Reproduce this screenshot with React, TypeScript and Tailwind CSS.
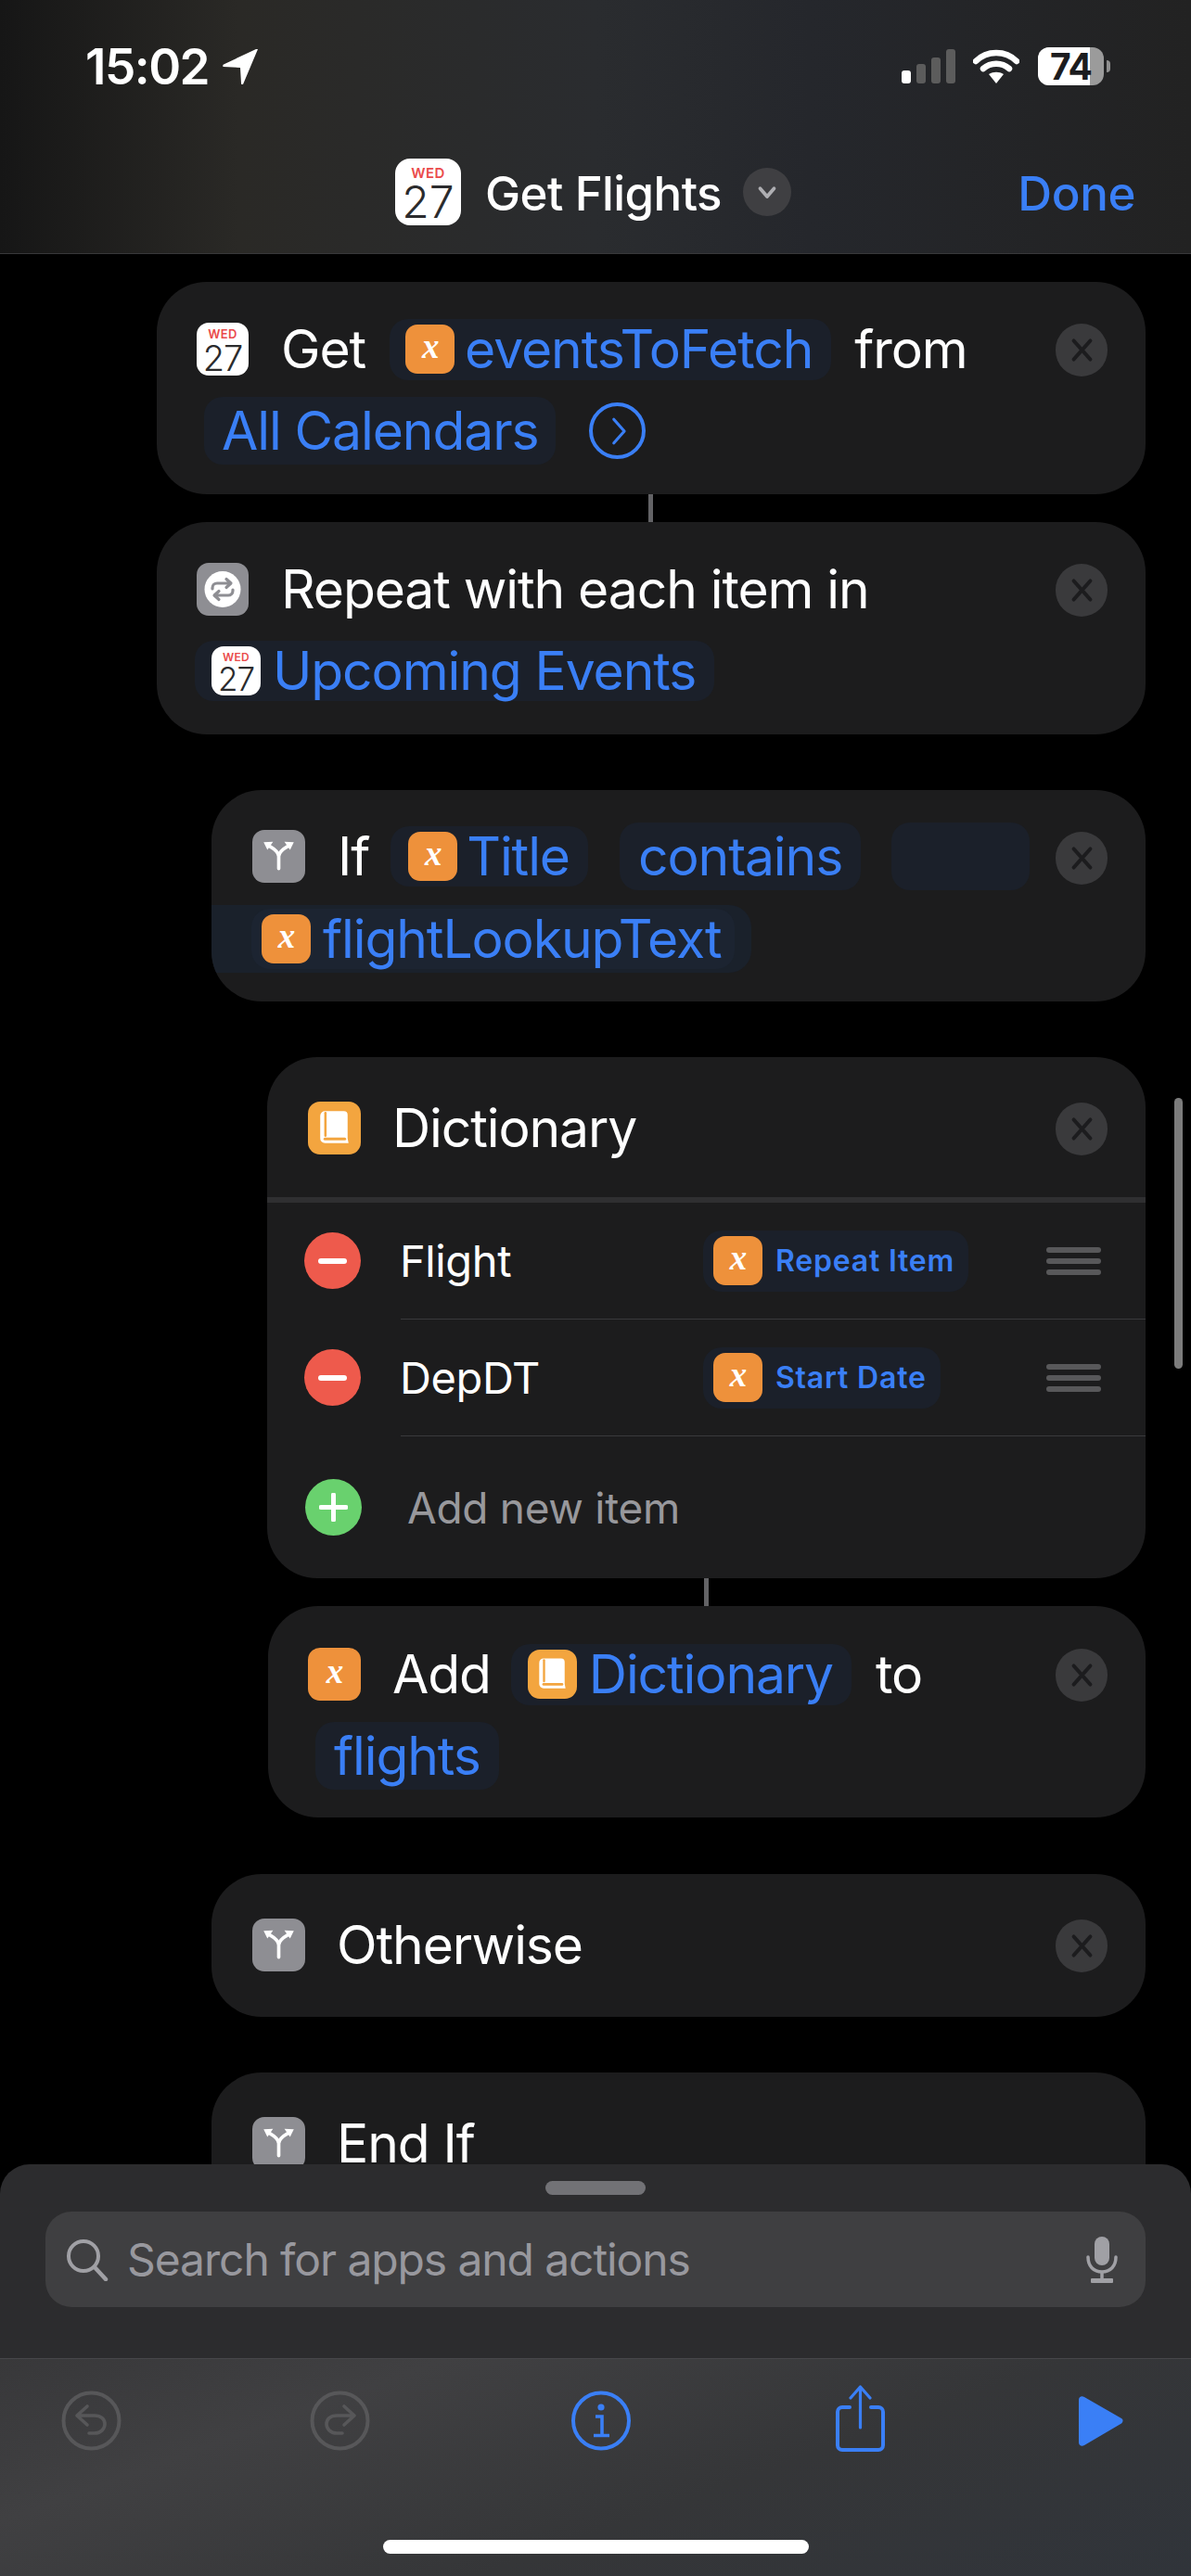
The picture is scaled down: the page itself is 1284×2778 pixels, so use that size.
import type { ReactNode } from "react"

const Calendar = ({ box, wed, day }: { box: string; wed: string; day: string }) => (
    <div className={`flex shrink-0 flex-col items-center bg-white ${box}`}>
        <span className={`font-semibold leading-none tracking-wide text-[#ea4b4b] ${wed}`}>WED</span>
        <span className={`font-light leading-none text-[#2b2b2d] ${day}`}>27</span>
    </div>
)

const CalendarTile = () => <Calendar box="h-[57px] w-[56px] rounded-[13px] pt-[6px]" wed="text-[13px]" day="text-[38px]" />

const VarTile = ({ size = "h-[53px] w-[53px]", bg = "bg-[#ee913b]" }: { size?: string; bg?: string }) => (
    <div className={`flex shrink-0 items-center justify-center rounded-[13px] ${size} ${bg}`}>
        <span className="font-['Liberation_Serif',serif] text-[37px] leading-none font-bold italic text-white -translate-y-[3px]">x</span>
    </div>
)

const BookGlyph = () => (
    <svg viewBox="0 0 56 56" className="h-full w-full">
        <path d="M18 10h20a4 4 0 0 1 4 4v25l1 5H18a5 5 0 0 1-5-5V15a5 5 0 0 1 5-5z" fill="#fff" />
        <path d="M18.5 12v24" stroke="#f3a53f" strokeWidth="2.5" strokeLinecap="round" />
        <path d="M18 39.5h21" stroke="#f3a53f" strokeWidth="3" strokeLinecap="round" />
    </svg>
)

const BookTile = ({ size = "h-[57px] w-[57px]" }: { size?: string }) => (
    <div className={`shrink-0 rounded-[13px] bg-[#f3a53f] ${size}`}>
        <BookGlyph />
    </div>
)

const BranchTile = () => (
    <div className="h-[57px] w-[57px] shrink-0 rounded-[13px] bg-[#8e8e93]">
        <svg viewBox="0 0 56 56" className="h-full w-full">
            <path d="M28 41V28c0-4-3-7-10-11M28 28c0-4 3-7 10-11" fill="none" stroke="#fff" strokeWidth="3.6" strokeLinecap="round" />
            <path d="M12 13l10-.5-6 8.5zM44 13l-10-.5 6 8.5z" fill="#fff" />
        </svg>
    </div>
)

const RepeatTile = () => (
    <div className="h-[57px] w-[56px] shrink-0 rounded-[13px] bg-[#8e8e93]">
        <svg viewBox="0 0 56 57" className="h-full w-full">
            <circle cx="28" cy="28.5" r="19.5" fill="#fff" />
            <path d="M17 28v-1a5 5 0 0 1 5-5h14M32 17.5l5 4.5-5 4.5M39 29v1a5 5 0 0 1-5 5H20M24 39.5L19 35l5-4.5" fill="none" stroke="#8e8e93" strokeWidth="3.2" strokeLinecap="round" strokeLinejoin="round" />
        </svg>
    </div>
)

const Close = ({ top }: { top: string }) => (
    <div className={`mr-[41px] flex h-[57px] w-[56px] shrink-0 items-center justify-center rounded-full bg-[#3a3a3c] ${top}`}>
        <svg viewBox="0 0 24 24" className="h-[27px] w-[27px]">
            <path d="M4 3l16 18M20 3L4 21" stroke="#1c1c1e" strokeWidth="3.4" strokeLinecap="round" />
        </svg>
    </div>
)

const Pill = ({ children, className }: { children: ReactNode; className: string }) => (
    <div className={`flex shrink-0 items-center rounded-[20px] bg-[#1b202a] text-[#3a7ff6] ${className}`}>{children}</div>
)

const Row = ({ children, className = "" }: { children: ReactNode; className?: string }) => (
    <div className={`flex h-[73px] items-center ${className}`}>{children}</div>
)

const Card = ({ children, className }: { children: ReactNode; className: string }) => (
    <div className={`mr-[49px] flex rounded-[54px] bg-[#1c1c1d] ${className}`}>{children}</div>
)

const Connector = ({ className }: { className: string }) => <div className={`h-[30px] w-[5px] bg-[#636366] ${className}`} />

const DragHandle = () => (
    <div className="ml-auto mr-[48px] flex w-[59px] flex-col gap-[6px]">
        <div className="h-[6px] rounded-full bg-[#58585a]" />
        <div className="h-[6px] rounded-full bg-[#58585a]" />
        <div className="h-[6px] rounded-full bg-[#58585a]" />
    </div>
)

const MinusCircle = () => (
    <div className="flex h-[61px] w-[61px] shrink-0 items-center justify-center rounded-full bg-[#ee5a4c]">
        <div className="h-[6px] w-[31px] rounded-full bg-white" />
    </div>
)

const StatusBar = () => (
    <div className="mt-[50px] flex h-[43px] items-center text-white">
        <span className="ml-[92px] pt-[2px] text-[53px] leading-none font-semibold tracking-[-1.5px]">15:02</span>
        <svg viewBox="0 0 38 38" className="ml-[15px] h-[38px] w-[38px]">
            <path d="M38 0L22 38c-1 1-2 0-2-1l-1-17L1 19c-1 0-1-2 0-2.500L36 0c1-.5 2-.5 2 0z" fill="#fff" />
        </svg>
        <div className="ml-auto flex h-[37px] items-end gap-[6px]">
            <div className="h-[14px] w-[10px] rounded-[3px] bg-white" />
            <div className="h-[21px] w-[10px] rounded-[3px] bg-[#5c5c5c]" />
            <div className="h-[28px] w-[10px] rounded-[3px] bg-[#5c5c5c]" />
            <div className="h-[37px] w-[10px] rounded-[3px] bg-[#5c5c5c]" />
        </div>
        <svg viewBox="0 0 50 37" className="ml-[19px] h-[37px] w-[50px]">
            <path d="M3 13C15 1 35 1 47 13M11 21c8-7 20-7 28 0" fill="none" stroke="#fff" strokeWidth="6.500" strokeLinecap="round" />
            <path d="M17 27c5-3 11-3 16 0l-8 10z" fill="#fff" />
        </svg>
        <div className="relative ml-[20px] flex h-[41px] w-[71px] items-center justify-center rounded-[12px] bg-[#9b9b9b]">
            <div className="absolute inset-y-0 left-0 w-[56px] rounded-l-[12px] bg-white" />
            <span className="relative text-[39px] leading-none font-bold tracking-[-1px] text-[#1c1c1e]">74</span>
        </div>
        <div className="ml-[3px] mr-[87px] h-[13px] w-[4px] rounded-r-full bg-[#8f8f8f]" />
    </div>
)

const Header = () => (
    <header className="h-[274px] shrink-0 border-b border-[#38383a] bg-[linear-gradient(90deg,#161616_0%,#2a2926_20%,#2a2c2f_50%,#25272c_68%,#222222_100%)]">
        <StatusBar />
        <div className="mt-[78px] flex h-[72px] items-center">
            <Calendar box="ml-[426px] h-[72px] w-[71px] rounded-[16px] pt-[8px]" wed="text-[15px]" day="text-[48px]" />
            <span className="ml-[26px] pt-[2px] text-[51px] leading-none font-medium tracking-[-0.6px] text-white">Get Flights</span>
            <div className="ml-[23px] flex h-[52px] w-[52px] items-center justify-center rounded-full bg-[#3f3f42]">
                <svg viewBox="0 0 24 24" className="h-[30px] w-[30px]">
                    <path d="M6 9l6 7 6-7" fill="none" stroke="#aeaeb2" strokeWidth="3" strokeLinecap="round" strokeLinejoin="round" />
                </svg>
            </div>
            <span className="ml-auto mr-[60px] pt-[2px] text-[51px] leading-none font-medium tracking-[-0.4px] text-[#3a7ff6]">Done</span>
        </div>
    </header>
)

const Workflow = () => (
    <main className="relative min-h-0 flex-1 overflow-hidden pt-[30px] text-[57px] leading-none tracking-[-1.1px] text-white">
        <Card className="ml-[169px] h-[229px]">
            <div className="flex-1 pt-[36px] pl-[43px]">
                <Row>
                    <CalendarTile />
                    <span className="ml-[35px]">Get</span>
                    <Pill className="ml-[26px] h-[66px] pl-[17px] pr-[20px]">
                        <VarTile />
                        <span className="ml-[11px]">eventsToFetch</span>
                    </Pill>
                    <span className="ml-[25px]">from</span>
                </Row>
                <Row className="mt-[15px]">
                    <Pill className="ml-[8px] h-[73px] pl-[19px] pr-[19px]">All Calendars</Pill>
                    <div className="ml-[36px] flex h-[61px] w-[61px] items-center justify-center rounded-full border-[4px] border-[#3a7ff6]">
                        <svg viewBox="0 0 24 24" className="h-[34px] w-[34px]">
                            <path d="M9 3l8 9-8 9" fill="none" stroke="#3a7ff6" strokeWidth="2.2" strokeLinecap="round" strokeLinejoin="round" />
                        </svg>
                    </div>
                </Row>
            </div>
            <Close top="mt-[45px]" />
        </Card>
        <Connector className="ml-[699px]" />
        <Card className="ml-[169px] h-[229px]">
            <div className="flex-1 pt-[36px] pl-[43px]">
                <Row>
                    <RepeatTile />
                    <span className="ml-[35px]">Repeat with each item in</span>
                </Row>
                <Row className="mt-[15px]">
                    <Pill className="-ml-[2px] h-[65px] pl-[18px] pr-[20px]">
                        <Calendar box="h-[53px] w-[53px] rounded-[13px] pt-[6px]" wed="text-[12px]" day="text-[35px]" />
                        <span className="ml-[13px]">Upcoming Events</span>
                    </Pill>
                </Row>
            </div>
            <Close top="mt-[45px]" />
        </Card>
        <Card className="ml-[228px] mt-[60px] h-[228px] overflow-hidden">
            <div className="flex-1 pt-[35px]">
                <Row className="pl-[44px]">
                    <BranchTile />
                    <span className="ml-[35px]">If</span>
                    <Pill className="ml-[23px] h-[65px] pl-[19px] pr-[20px]">
                        <VarTile />
                        <span className="ml-[10px]">Title</span>
                    </Pill>
                    <Pill className="ml-[34px] h-[73px] px-[20px]">contains</Pill>
                    <Pill className="ml-[33px] h-[73px] w-[149px]">{""}</Pill>
                </Row>
                <Row className="mt-[16px]">
                    <div className="flex h-[73px] w-[582px] items-center rounded-r-[24px] bg-[#1a212b] pl-[43px]">
                        <div className="flex h-[65px] items-center rounded-[20px] bg-[#1c2431] pl-[11px] pr-[14px] text-[#3a7ff6]">
                            <VarTile />
                            <span className="ml-[13px]">flightLookupText</span>
                        </div>
                    </div>
                </Row>
            </div>
            <Close top="mt-[45px]" />
        </Card>
        <Card className="ml-[288px] mt-[60px] h-[562px] flex-col">
            <div className="flex h-[157px] shrink-0 border-b-[6px] border-[#2f2f31]">
                <div className="ml-[44px] mt-[48px] flex h-[57px] flex-1 items-center">
                    <BookTile />
                    <span className="ml-[34px]">Dictionary</span>
                </div>
                <Close top="mt-[49px]" />
            </div>
            <div className="ml-[144px] flex h-[126px] items-center border-b border-[#3a3a3c]">
                <div className="-ml-[104px] shrink-0">
                    <MinusCircle />
                </div>
                <span className="ml-[42px] w-[327px] text-[47px] tracking-[-0.4px]">Flight</span>
                <Pill className="h-[66px] pl-[11px] pr-[15px]">
                    <VarTile />
                    <span className="ml-[14px] text-[32px] font-semibold tracking-[0.8px]">Repeat Item</span>
                </Pill>
                <DragHandle />
            </div>
            <div className="ml-[144px] flex h-[126px] items-center border-b border-[#3a3a3c]">
                <div className="-ml-[104px] shrink-0">
                    <MinusCircle />
                </div>
                <span className="ml-[42px] w-[327px] text-[47px] tracking-[-0.4px]">DepDT</span>
                <Pill className="h-[66px] pl-[11px] pr-[15px]">
                    <VarTile />
                    <span className="ml-[14px] text-[32px] font-semibold tracking-[0.8px]">Start Date</span>
                </Pill>
                <DragHandle />
            </div>
            <div className="flex flex-1 items-start pt-[46px] pl-[41px]">
                <div className="flex h-[61px] w-[61px] shrink-0 items-center justify-center rounded-full bg-[#69d16e]">
                    <svg viewBox="0 0 31 31" className="h-[31px] w-[31px]">
                        <path d="M15.500 2v27M2 15.500h27" stroke="#fff" strokeWidth="5" strokeLinecap="round" />
                    </svg>
                </div>
                <span className="ml-[49px] mt-[8px] text-[46px] tracking-[-0.3px] text-[#98989c]">Add new item</span>
            </div>
        </Card>
        <Connector className="ml-[759px]" />
        <Card className="ml-[289px] h-[228px]">
            <div className="flex-1 pt-[37px] pl-[43px]">
                <Row>
                    <VarTile size="h-[57px] w-[57px]" />
                    <span className="ml-[34px]">Add</span>
                    <Pill className="ml-[22px] h-[66px] pl-[18px] pr-[20px]">
                        <BookTile size="h-[53px] w-[53px]" />
                        <span className="ml-[13px]">Dictionary</span>
                    </Pill>
                    <span className="ml-[26px]">to</span>
                </Row>
                <Row className="mt-[15px]">
                    <Pill className="ml-[8px] h-[73px] px-[20px]">flights</Pill>
                </Row>
            </div>
            <Close top="mt-[46px]" />
        </Card>
        <Card className="ml-[228px] mt-[61px] h-[154px]">
            <div className="flex flex-1 items-start pt-[48px] pl-[44px]">
                <BranchTile />
                <span className="ml-[34px] flex h-[57px] items-center">Otherwise</span>
            </div>
            <Close top="mt-[49px]" />
        </Card>
        <Card className="ml-[228px] mt-[60px] h-[154px]">
            <div className="flex flex-1 items-start pt-[48px] pl-[44px]">
                <BranchTile />
                <span className="ml-[34px] flex h-[57px] items-center">End If</span>
            </div>
        </Card>
        {/* scroll indicator */}
        <div className="absolute left-[1266px] top-[910px] h-[292px] w-[9px] rounded-full bg-[#7c7c7c]" />
    </main>
)

const SearchSheet = () => (
    <section className="h-[209px] shrink-0 rounded-t-[32px] bg-[#2c2c2e] pt-[18px]">
        <div className="mx-auto h-[15px] w-[108px] rounded-full bg-[#727276]" />
        <div className="mx-[49px] mt-[18px] flex h-[103px] items-center rounded-[28px] bg-[#3f3f41]">
            <svg viewBox="0 0 46 46" className="ml-[22px] h-[46px] w-[46px]">
                <circle cx="19" cy="19" r="16" fill="none" stroke="#a0a0a5" strokeWidth="4" />
                <path d="M31 31l12 13" stroke="#a0a0a5" strokeWidth="4.500" strokeLinecap="round" />
            </svg>
            <span className="ml-[20px] text-[48px] leading-none tracking-[-1.1px] text-[#98989e]">Search for apps and actions</span>
            <svg viewBox="0 0 34 50" className="ml-auto mr-[30px] h-[50px] w-[34px]">
                <rect x="9" y="0" width="16" height="31" rx="8" fill="#a0a0a5" />
                <path d="M2 22c0 10 6 16 15 16s15-6 15-16" fill="none" stroke="#a0a0a5" strokeWidth="3.500" strokeLinecap="round" />
                <path d="M17 38v8" stroke="#a0a0a5" strokeWidth="3.500" />
                <rect x="5" y="45" width="24" height="5" rx="1" fill="#a0a0a5" />
            </svg>
        </div>
    </section>
)

const Toolbar = () => (
    <footer className="flex h-[235px] shrink-0 flex-col border-t border-[#47474a] bg-[linear-gradient(160deg,#38383a_0%,#404042_25%,#353638_60%,#30343a_100%)]">
        <div className="mt-[28px] flex h-[72px] items-center">
            <svg viewBox="0 0 65 65" className="ml-[66px] mt-[5px] h-[65px] w-[65px]">
                <circle cx="32.500" cy="32.500" r="30" fill="none" stroke="#575759" strokeWidth="4" />
                <path d="M28 17L17 27l11 10M17 27h19c7 0 11 4 11 9s-4 10-11 10h-6" fill="none" stroke="#575759" strokeWidth="3.600" strokeLinecap="round" strokeLinejoin="round" />
            </svg>
            <svg viewBox="0 0 65 65" className="ml-[203px] mt-[5px] h-[65px] w-[65px]">
                <circle cx="32.500" cy="32.500" r="30" fill="none" stroke="#575759" strokeWidth="4" />
                <path d="M37 17l11 10-11 10M48 27H29c-7 0-11 4-11 9s4 10 11 10h6" fill="none" stroke="#575759" strokeWidth="3.600" strokeLinecap="round" strokeLinejoin="round" />
            </svg>
            <svg viewBox="0 0 64 65" className="ml-[217px] mt-[5px] h-[65px] w-[64px]">
                <circle cx="32" cy="32.500" r="30" fill="none" stroke="#3a7ff6" strokeWidth="4" />
                <circle cx="32" cy="18" r="3.600" fill="#3a7ff6" />
                <path d="M26 28h7v20M24 48.500h17" fill="none" stroke="#3a7ff6" strokeWidth="3.600" />
            </svg>
            <svg viewBox="0 0 55 72" className="ml-[220px] h-[72px] w-[55px]">
                <path d="M16 24H8a5 5 0 0 0-5 5v36a5 5 0 0 0 5 5h39a5 5 0 0 0 5-5V29a5 5 0 0 0-5-5h-8" fill="none" stroke="#3a7ff6" strokeWidth="4" strokeLinecap="round" />
                <path d="M27.500 46V3M17 14L27.500 2 38 14" fill="none" stroke="#3a7ff6" strokeWidth="3.200" strokeLinecap="round" strokeLinejoin="round" />
            </svg>
            <svg viewBox="0 0 48 54" className="ml-[208px] mt-[5px] h-[54px] w-[48px]">
                <path d="M0 4c0-3 3-5 6-3l40 23c2 1 2 4 0 5.500L6 53c-3 2-6 0-6-3z" fill="#3a7ff6" />
            </svg>
        </div>
        <div className="mb-[24px] mt-auto h-[15px] w-[459px] self-center rounded-full bg-white" />
    </footer>
)

const App = () => {
    return (
        <div className="flex h-[2778px] w-[1284px] flex-col overflow-hidden bg-black font-['Inter',sans-serif]">
            <Header />
            <Workflow />
            <SearchSheet />
            <Toolbar />
        </div>
    )
}

export default App
